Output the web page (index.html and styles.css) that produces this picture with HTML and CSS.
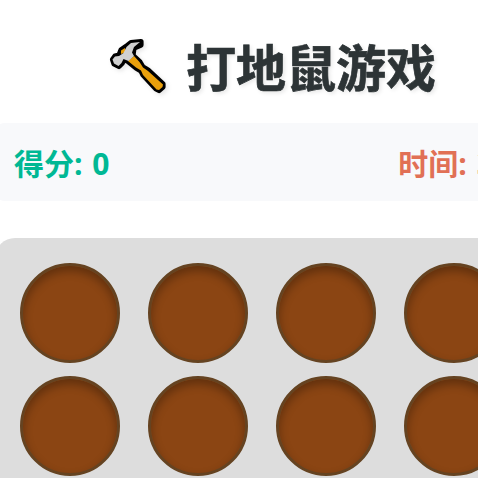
FILE: index.html
```
<!DOCTYPE html>
<html lang="zh-CN">
<head>
<meta charset="UTF-8">
<title>打地鼠游戏</title>
<link rel="stylesheet" href="styles.css">
</head>
<body>
<main class="game">
  <h1 class="title">
    <svg class="hammer" viewBox="0 0 64 64" aria-hidden="true">
      <path class="outline" d="M35 7.5 L25 8.5 L20 12.5 L15 16 L13 21 L9 22 L6.5 25.5 L8 30 L13 32.5 L16 29.5 L18 25.5 L22 27.5 L30 34 L35 37 L37 41 L50 55 L53 56.5 L57 53 L57 50 L42 36 L37 33 L34 28 L27 21.5 L28 14 L35 11 Z"/>
      <path class="handle" d="M15 16.5 L19 14 L20 18 L15 20 Z M22 27 L28 22 L33.5 28 L37 33.5 L42 37 L57 50.5 L56.5 53 L53 56 L50.5 55.5 L37 41 L35 36.5 L30 33.5 Z"/>
      <path class="head" d="M34 8 L25 9 L20.5 13 L17.5 19 L13 22 L9 22.5 L6.5 25.5 L8 29.5 L12.5 32 L15.5 29 L17.5 25 L22.5 27 L28 22 L26 18.5 L28 13 Z"/>
    </svg>
    <span>打地鼠游戏</span>
  </h1>
  <div class="stats">
    <span class="score">得分: 0</span>
    <span class="time">时间: 30</span>
  </div>
  <div class="board">
    <div class="hole"></div><div class="hole"></div><div class="hole"></div><div class="hole"></div>
    <div class="hole"></div><div class="hole"></div><div class="hole"></div><div class="hole"></div>
  </div>
</main>
</body>
</html>
```
FILE: styles.css
```
* { box-sizing: border-box; }
html { overflow: hidden; }
body {
  margin: 0;
  height: 478px;
  overflow: hidden;
  background: #fff;
  font-family: "Liberation Sans", "Noto Sans CJK SC", sans-serif;
}
.game {
  width: 536px;
  margin-left: -5px;
  padding-top: 32px;
}
.title {
  display: flex;
  height: 75px;
  margin: 0 0 16px 111px;
  align-items: center;
  gap: 16px;
  color: #2d3436;
  font-size: 50px;
  line-height: 75px;
  white-space: nowrap;
  text-shadow: 2px 2px 4px rgba(0, 0, 0, .1);
  -webkit-text-stroke: .7px #2d3436;
}
.title span { padding-top: 2px; }
.hammer {
  width: 64px;
  height: 64px;
  flex: none;
  margin-top: -7px;
  overflow: visible;
  filter: drop-shadow(2px 2px 2px rgba(0, 0, 0, .1));
}
.outline { fill: #000; stroke: #000; stroke-width: 5.2; stroke-linejoin: round; }
.handle { fill: #e9a00c; }
.head { fill: #d0d0d0; }
.stats {
  display: flex;
  height: 78px;
  padding: 0 20px 1px 19px;
  align-items: center;
  justify-content: space-between;
  border-radius: 10px;
  background: #f8f9fb;
  font-family: "Open Sans", "Noto Sans CJK SC", sans-serif;
  font-size: 30px;
  font-weight: bold;
  word-spacing: 2px;
  white-space: nowrap;
}
.score { color: #00b894; }
.time { color: #e17055; }
.board {
  display: grid;
  grid-template-columns: repeat(4, 100px);
  grid-auto-rows: 100px;
  gap: 13px 28px;
  height: 400px;
  margin-top: 37px;
  padding: 25px;
  border-radius: 20px;
  background: #ddd;
}
.hole {
  border: 3px solid #654321;
  border-radius: 50%;
  background: #8b4513;
  box-shadow: inset 0 5px 10px rgba(0, 0, 0, .3);
}
```
